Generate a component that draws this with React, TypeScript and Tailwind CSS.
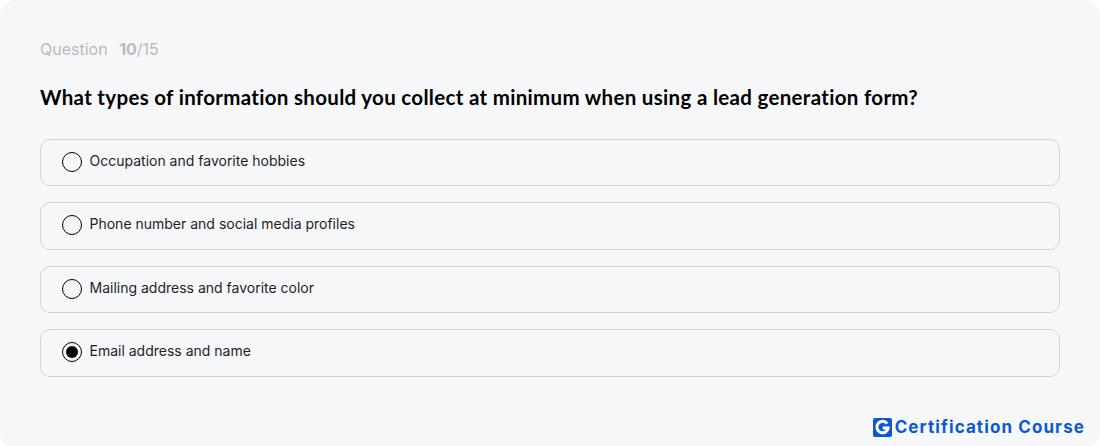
const OPTIONS = [
  "Occupation and favorite hobbies",
  "Phone number and social media profiles",
  "Mailing address and favorite color",
  "Email address and name",
];

const SELECTED = 3;

function Radio({ checked }: { checked: boolean }) {
  return (
    <span className="flex h-5 w-5 shrink-0 -translate-y-px items-center justify-center rounded-full border-[1.5px] border-black bg-[#f6f7f9]">
      {checked && <span className="h-3 w-3 rounded-full bg-black" />}
    </span>
  );
}

export default function App() {
  return (
    <div className="h-[446px] w-[1100px] bg-white font-['Inter',sans-serif]">
      <div className="relative h-full rounded-t-[16px] rounded-b-[12px] bg-[#f6f7f9] px-10 pt-[39px]">
        <div className="flex h-5 items-center gap-[11.5px] text-base leading-5 text-[#b8bbc2]">
          <span>Question</span>
          <span>
            <span className="font-bold">10</span>/15
          </span>
        </div>

        <h1 className="mt-[17px] h-[42px] text-[20.5px] font-bold leading-[42px] tracking-[0.31px] text-black font-['Lato',sans-serif]">
          What types of information should you collect at minimum when using a lead generation form?
        </h1>

        <div className="mt-[20.75px] flex flex-col gap-4">
          {OPTIONS.map((o, i) => (
            <div
              key={o}
              className="flex h-[47.5px] items-center gap-[7.5px] rounded-[10px] border border-[#d2d4d9] pl-[21px] text-sm text-[#1c1f26]"
            >
              <Radio checked={i === SELECTED} />
              <span className="-translate-y-0.5">{o}</span>
            </div>
          ))}
        </div>

        {/* watermark logo */}
        <div className="absolute bottom-[9px] right-[15px] flex items-center gap-[3px]">
          <span className="flex h-[19px] w-[19px] items-center justify-center rounded-[2px] bg-[#0b57d6]">
            <svg viewBox="0 0 16 16" className="h-[17px] w-[17px]" fill="none">
              <path
                d="M12.4 4.4A5.4 5.4 0 1 0 13.4 8.4H8.2"
                stroke="#fff"
                strokeWidth="2.8"
              />
            </svg>
          </span>
          <span className="text-[17px] font-bold leading-5 tracking-[1.1px] text-[#0b57d6] font-['Inter',sans-serif]">
            Certification Course
          </span>
        </div>
      </div>
    </div>
  );
}
